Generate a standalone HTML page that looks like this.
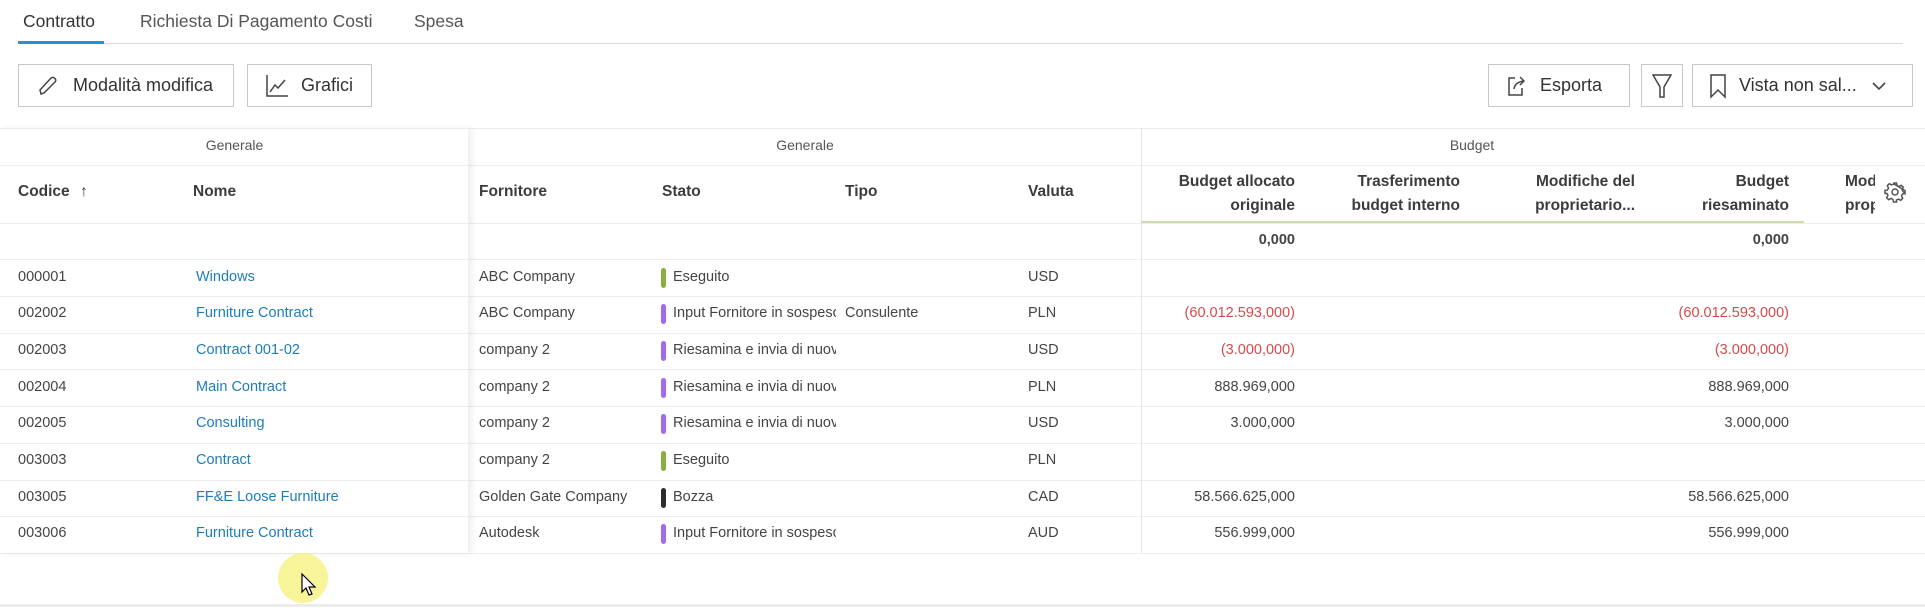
<!DOCTYPE html>
<html><head><meta charset="utf-8"><style>
*{box-sizing:border-box;margin:0;padding:0}
body{width:1925px;height:608px;background:#fff;font-family:"Liberation Sans",sans-serif;color:#3c3c3c;position:relative;overflow:hidden}
.a{position:absolute;white-space:nowrap}
.tab{font-size:17.5px;top:11px;color:#555}
.btn{position:absolute;top:64px;height:43px;border:1px solid #c8c8c8;background:#fff;font-size:18px;color:#333;display:flex;align-items:center}
.hl{position:absolute;left:0;right:0;height:1px;background:#eeeeee}
.h{font-size:15.5px;font-weight:bold;color:#3c3c3c}
.d{font-size:14.5px;color:#444}
.lnk{color:#1e7db8}
.red{color:#d24b4b}
.bar{position:absolute;width:5px;height:20px;border-radius:3px}
</style></head><body>
<div class="a tab" style="left:23px;color:#333">Contratto</div>
<div class="a tab" style="left:140px">Richiesta Di Pagamento Costi</div>
<div class="a tab" style="left:414px">Spesa</div>
<div class="a" style="left:18px;top:43px;width:1885px;height:1px;background:#d9d9d9"></div>
<div class="a" style="left:18px;top:41px;width:86px;height:3px;background:#1f96d1"></div>
<div class="btn" style="left:18px;width:216px"><svg style="margin:0 14px 0 18px" width="22" height="22" viewBox="0 0 22 22" fill="none" stroke="#444" stroke-width="1.5"><path d="M4 19 L3 15 L14 3 Q16 1.5 18 3.5 Q19.5 5.5 18 7 L7 18 Z"/></svg>Modalità modifica</div>
<div class="btn" style="left:247px;width:125px"><svg style="margin:0 12px 0 17px" width="24" height="24" viewBox="0 0 24 24" fill="none" stroke="#444" stroke-width="1.5"><path d="M2 1 V22 H23 M5 18 L10 11 L13 14 L20 6"/></svg>Grafici</div>
<div class="btn" style="left:1488px;width:142px"><svg style="margin:0 12px 0 17px" width="22" height="24" viewBox="0 0 22 24" fill="none" stroke="#444" stroke-width="1.5"><path d="M9 4 H3 V21 H16 V14 M8 15 Q9 8 18 7 M14 3 L18 7 L14 11"/></svg>Esporta</div>
<div class="btn" style="left:1641px;width:42px;justify-content:center"><svg width="20" height="26" viewBox="0 0 20 26" fill="none" stroke="#444" stroke-width="1.5"><path d="M1 2 H19 L12 14 V24 H8 V14 Z"/></svg></div>
<div class="btn" style="left:1692px;width:221px"><svg style="margin:0 12px 0 16px" width="18" height="26" viewBox="0 0 18 26" fill="none" stroke="#444" stroke-width="1.5"><path d="M2 2 H16 V24 L9 17 L2 24 Z"/></svg>Vista non sal...<svg style="margin-left:14px" width="16" height="10" viewBox="0 0 16 10" fill="none" stroke="#444" stroke-width="1.6"><path d="M2 2 L8 8 L14 2"/></svg></div>
<div class="hl" style="top:128px;background:#ececec"></div>
<div class="hl" style="top:165px"></div>
<div class="hl" style="top:223px"></div>
<div class="hl" style="top:259px"></div>
<div class="hl" style="top:296px"></div>
<div class="hl" style="top:333px"></div>
<div class="hl" style="top:369px"></div>
<div class="hl" style="top:406px"></div>
<div class="hl" style="top:443px"></div>
<div class="hl" style="top:480px"></div>
<div class="hl" style="top:516px"></div>
<div class="hl" style="top:553px"></div>
<div class="hl" style="top:604px;height:3px;background:#ececec"></div>
<div class="a" style="left:1141px;top:128px;width:1px;height:425px;background:#e4e4e4"></div>
<div class="a" style="left:1141px;top:221px;width:663px;height:2px;background:#cfdcb0"></div>
<div class="a" style="left:0;top:128px;width:469px;height:425px;box-shadow:3px 0 6px rgba(0,0,0,0.07);border-right:1px solid #f0f0f0"></div>
<div class="a" style="left:0;width:469px;top:137px;text-align:center;font-size:14px;color:#555">Generale</div>
<div class="a" style="left:469px;width:672px;top:137px;text-align:center;font-size:14px;color:#555">Generale</div>
<div class="a" style="left:1141px;width:662px;top:137px;text-align:center;font-size:14px;color:#555">Budget</div>
<div class="a h" style="left:18px;top:183px">Codice <span style="font-weight:normal;margin-left:6px">↑</span></div>
<div class="a h" style="left:193px;top:183px">Nome</div>
<div class="a h" style="left:479px;top:183px">Fornitore</div>
<div class="a h" style="left:662px;top:183px">Stato</div>
<div class="a h" style="left:845px;top:183px">Tipo</div>
<div class="a h" style="left:1028px;top:183px">Valuta</div>
<div class="a h" style="right:630px;top:170px;text-align:right;line-height:24px">Budget allocato<br>originale</div>
<div class="a h" style="right:465px;top:170px;text-align:right;line-height:24px">Trasferimento<br>budget interno</div>
<div class="a h" style="right:290px;top:170px;text-align:right;line-height:24px">Modifiche del<br>proprietario...</div>
<div class="a h" style="right:136px;top:170px;text-align:right;line-height:24px">Budget<br>riesaminato</div>
<div class="a h" style="left:1845px;width:30px;overflow:hidden;top:170px;line-height:24px">Mod<br>prop</div>
<svg class="a" style="left:1884px;top:181px" width="22" height="22" viewBox="0 0 22 22" fill="none" stroke="#555" stroke-width="1.5"><circle cx="11" cy="11" r="3"/><path d="M9.5 2h3l.5 2.5 2 1 2.3-1.2 2 2-1.2 2.3 1 2L21 12.5v-3M21 9.5v3l-2.5.5-1 2 1.2 2.3-2 2-2.3-1.2-2 1L12.5 21h-3l-.5-2.5-2-1-2.3 1.2-2-2L3.9 14.4l-1-2L1 12.5v-3l2.5-.5 1-2L3.3 4.7l2-2L7.6 3.9l2-1z"/></svg>
<div class="a d" style="right:630px;top:232px;font-weight:bold">0,000</div>
<div class="a d" style="right:136px;top:232px;font-weight:bold">0,000</div>
<div class="a d" style="left:18px;top:269px">000001</div><div class="a d lnk" style="left:196px;top:269px">Windows</div><div class="a d" style="left:479px;top:269px">ABC Company</div><div class="bar" style="left:661px;top:268px;background:#86b03e"></div><div class="a d" style="left:673px;top:269px">Eseguito</div><div class="a d" style="left:1028px;top:269px">USD</div>
<div class="a d" style="left:18px;top:305px">002002</div><div class="a d lnk" style="left:196px;top:305px">Furniture Contract</div><div class="a d" style="left:479px;top:305px">ABC Company</div><div class="bar" style="left:661px;top:304px;background:#a469f0"></div><div class="a d" style="left:673px;top:305px;width:163px;overflow:hidden">Input Fornitore in sospeso</div><div class="a d" style="left:845px;top:305px">Consulente</div><div class="a d" style="left:1028px;top:305px">PLN</div><div class="a d red" style="right:630px;top:305px">(60.012.593,000)</div><div class="a d red" style="right:136px;top:305px">(60.012.593,000)</div>
<div class="a d" style="left:18px;top:342px">002003</div><div class="a d lnk" style="left:196px;top:342px">Contract 001-02</div><div class="a d" style="left:479px;top:342px">company 2</div><div class="bar" style="left:661px;top:341px;background:#a469f0"></div><div class="a d" style="left:673px;top:342px;width:163px;overflow:hidden">Riesamina e invia di nuovo</div><div class="a d" style="left:1028px;top:342px">USD</div><div class="a d red" style="right:630px;top:342px">(3.000,000)</div><div class="a d red" style="right:136px;top:342px">(3.000,000)</div>
<div class="a d" style="left:18px;top:379px">002004</div><div class="a d lnk" style="left:196px;top:379px">Main Contract</div><div class="a d" style="left:479px;top:379px">company 2</div><div class="bar" style="left:661px;top:378px;background:#a469f0"></div><div class="a d" style="left:673px;top:379px;width:163px;overflow:hidden">Riesamina e invia di nuovo</div><div class="a d" style="left:1028px;top:379px">PLN</div><div class="a d" style="right:630px;top:379px">888.969,000</div><div class="a d" style="right:136px;top:379px">888.969,000</div>
<div class="a d" style="left:18px;top:415px">002005</div><div class="a d lnk" style="left:196px;top:415px">Consulting</div><div class="a d" style="left:479px;top:415px">company 2</div><div class="bar" style="left:661px;top:414px;background:#a469f0"></div><div class="a d" style="left:673px;top:415px;width:163px;overflow:hidden">Riesamina e invia di nuovo</div><div class="a d" style="left:1028px;top:415px">USD</div><div class="a d" style="right:630px;top:415px">3.000,000</div><div class="a d" style="right:136px;top:415px">3.000,000</div>
<div class="a d" style="left:18px;top:452px">003003</div><div class="a d lnk" style="left:196px;top:452px">Contract</div><div class="a d" style="left:479px;top:452px">company 2</div><div class="bar" style="left:661px;top:451px;background:#86b03e"></div><div class="a d" style="left:673px;top:452px">Eseguito</div><div class="a d" style="left:1028px;top:452px">PLN</div>
<div class="a d" style="left:18px;top:489px">003005</div><div class="a d lnk" style="left:196px;top:489px">FF&amp;E Loose Furniture</div><div class="a d" style="left:479px;top:489px">Golden Gate Company</div><div class="bar" style="left:661px;top:488px;background:#2d2d2d"></div><div class="a d" style="left:673px;top:489px">Bozza</div><div class="a d" style="left:1028px;top:489px">CAD</div><div class="a d" style="right:630px;top:489px">58.566.625,000</div><div class="a d" style="right:136px;top:489px">58.566.625,000</div>
<div class="a d" style="left:18px;top:525px">003006</div><div class="a d lnk" style="left:196px;top:525px">Furniture Contract</div><div class="a d" style="left:479px;top:525px">Autodesk</div><div class="bar" style="left:661px;top:524px;background:#a469f0"></div><div class="a d" style="left:673px;top:525px;width:163px;overflow:hidden">Input Fornitore in sospeso</div><div class="a d" style="left:1028px;top:525px">AUD</div><div class="a d" style="right:630px;top:525px">556.999,000</div><div class="a d" style="right:136px;top:525px">556.999,000</div>
<div class="a" style="left:278px;top:553px;width:50px;height:50px;border-radius:50%;background:rgba(245,240,120,0.75)"></div>
<svg class="a" style="left:301px;top:573px" width="16" height="24" viewBox="0 0 16 24"><path d="M1 1 V19 L5 15 L8 22 L11 21 L8 14 L14 14 Z" fill="#fff" stroke="#000" stroke-width="1.2"/></svg>
</body></html>
